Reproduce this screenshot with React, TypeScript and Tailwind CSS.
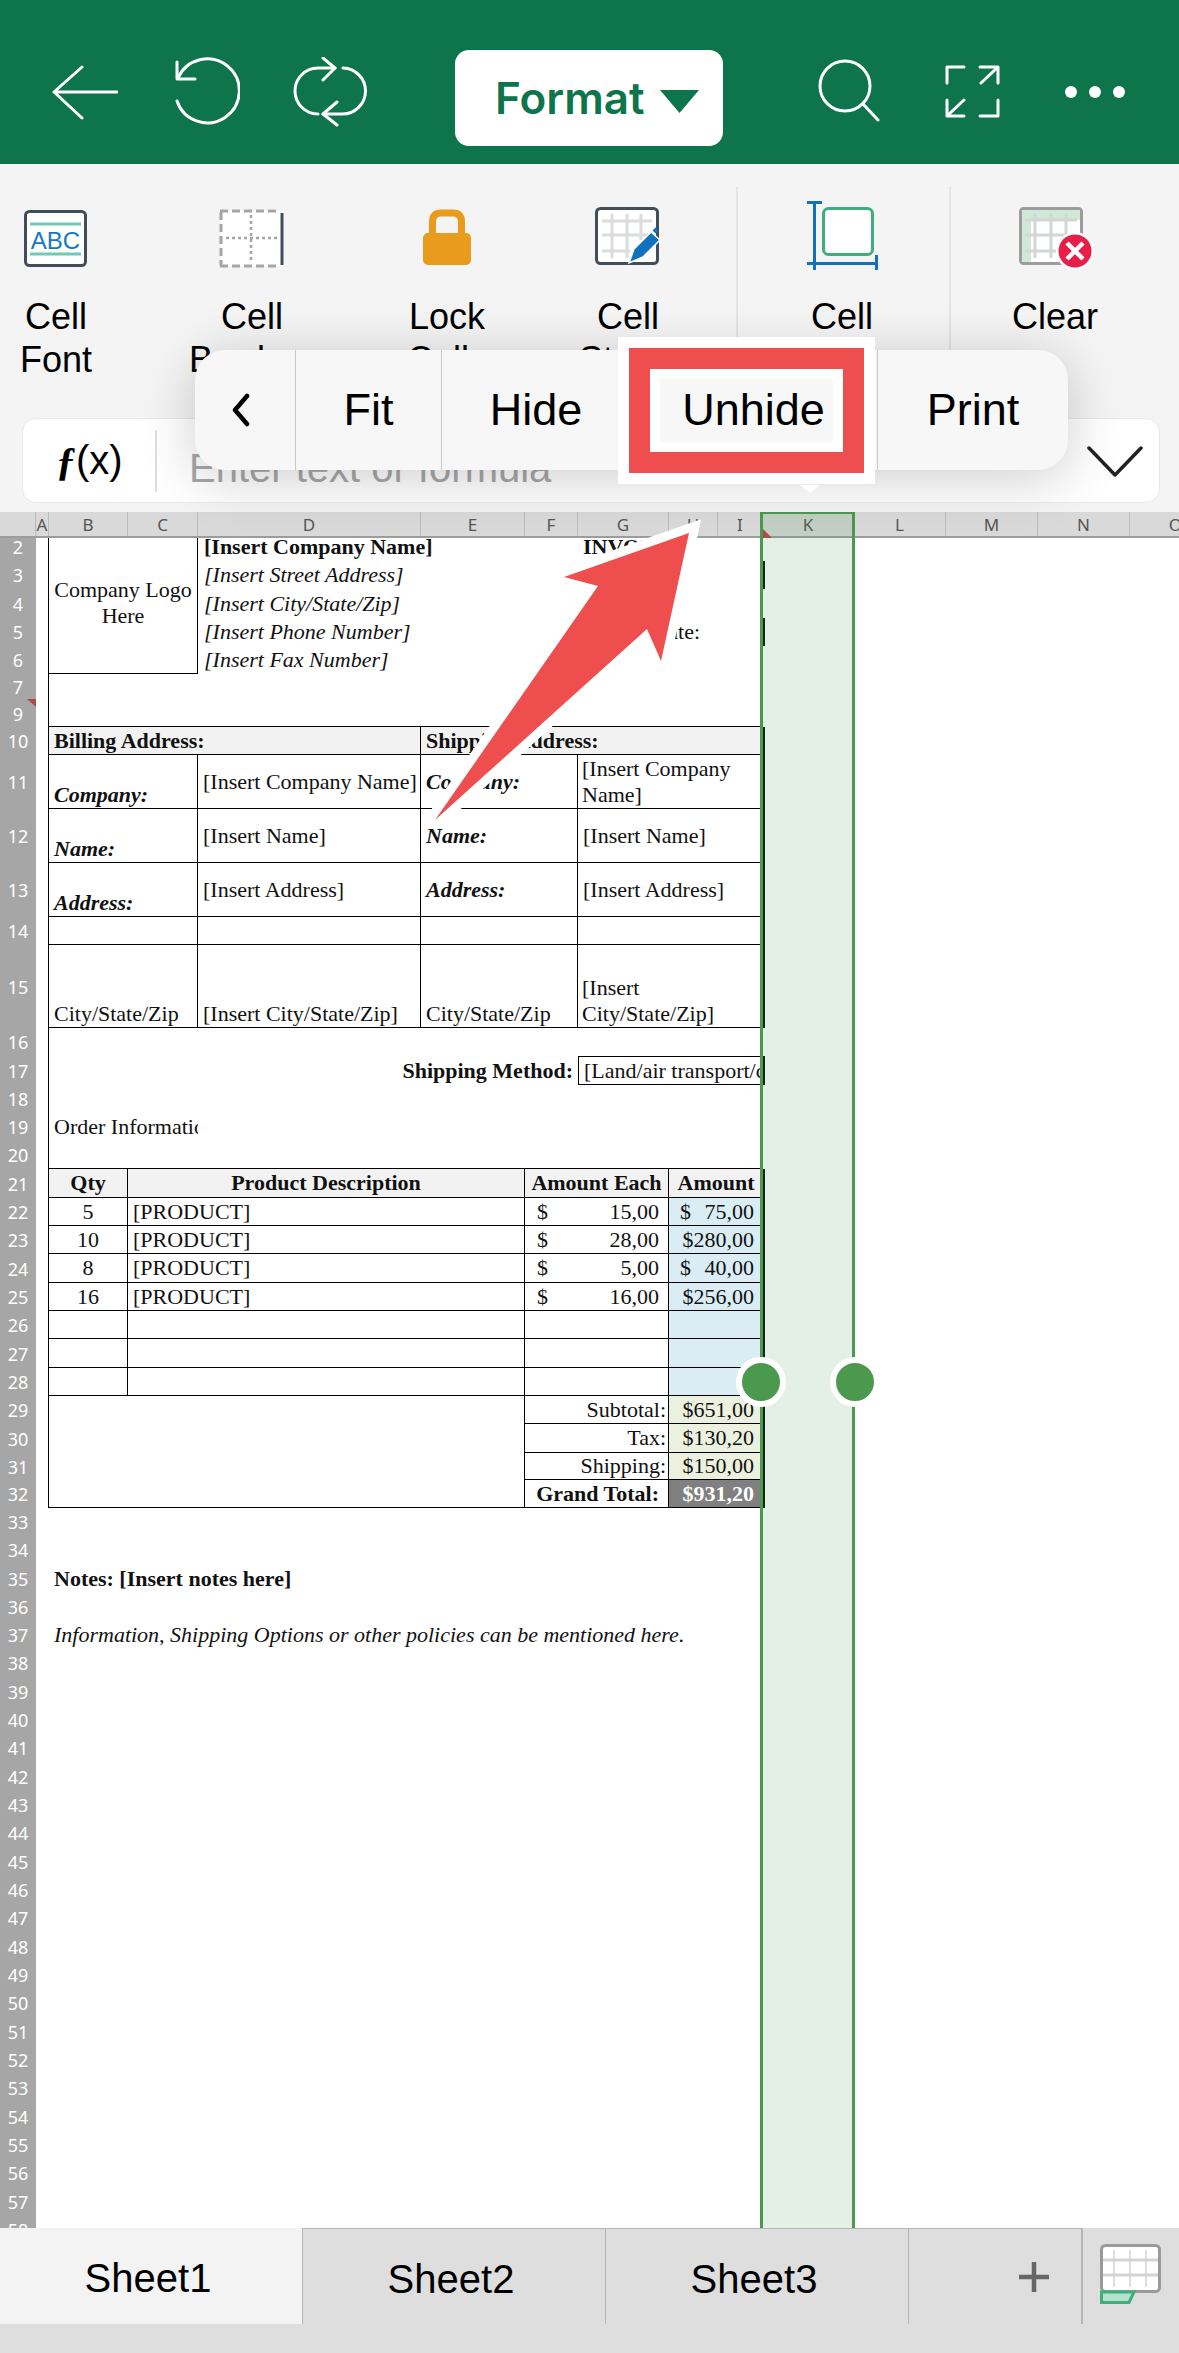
import type { ReactNode } from "react";

const COLS = [
  { label: "", w: "w-[36px]" },
  { label: "A", w: "w-[13px]" },
  { label: "B", w: "w-[79px]" },
  { label: "C", w: "w-[70px]" },
  { label: "D", w: "w-[223px]" },
  { label: "E", w: "w-[104px]" },
  { label: "F", w: "w-[53px]" },
  { label: "G", w: "w-[91px]" },
  { label: "H", w: "w-[49px]" },
  { label: "I", w: "w-[45px]" },
  { label: "K", w: "w-[91px]" },
  { label: "L", w: "w-[92px]" },
  { label: "M", w: "w-[92px]" },
  { label: "N", w: "w-[92px]" },
  { label: "O", w: "w-[92px]" },
];

const txt = "overflow-hidden whitespace-nowrap px-[5px] p-0";
const line = "border-b border-black";
const lineR = "border-r border-black";
const rowLabel = "relative bg-[#a6a6a6] p-0 text-center font-['Noto_Sans',sans-serif] text-[18px] leading-none text-white";

function Row({
  n,
  h = "h-[28px]",
  frame = true,
  dark = false,
  mark = false,
  children,
}: {
  n: number;
  h?: string;
  frame?: boolean;
  dark?: boolean;
  mark?: boolean;
  children?: ReactNode;
}) {
  return (
    <tr className={h}>
      <td className={rowLabel}>
        {n}
        {mark && (
          <svg className="absolute bottom-[-7px] right-0 z-10" width="9" height="8" viewBox="0 0 9 8">
            <path d="M0 0H9V8Z" fill="#b04a4a" />
          </svg>
        )}
      </td>
      <td className={frame ? "border-r border-black p-0" : "p-0"} />
      {children ?? <td colSpan={8} className="p-0" />}
      <td colSpan={5} className={dark ? "border-l-2 border-[#111] p-0" : "p-0"} />
    </tr>
  );
}

function ProductRow({
  n,
  h = "h-[28px]",
  qty,
  each,
  amount,
}: {
  n: number;
  h?: string;
  qty?: string;
  each?: string;
  amount?: ReactNode;
}) {
  return (
    <Row n={n} h={h} dark>
      <td className={`${line} ${lineR} p-0 text-center`}>{qty}</td>
      <td colSpan={3} className={`${line} ${lineR} ${txt} px-[4px]`}>
        {qty && "[PRODUCT]"}
      </td>
      <td colSpan={2} className={`${line} ${lineR} p-0 pl-[12px] pr-[9px]`}>
        {each && (
          <div className="flex justify-between">
            <span>$</span>
            <span>{each}</span>
          </div>
        )}
      </td>
      <td colSpan={2} className={`${line} bg-[#daedf4] p-0 pl-[11px] pr-[9px]`}>
        {amount}
      </td>
    </Row>
  );
}

function Money({ value, split }: { value: string; split?: boolean }) {
  return (
    <div className="flex justify-between">
      {split ? <span>$</span> : null}
      <span className={split ? "" : "ml-auto"}>{value}</span>
    </div>
  );
}

function TotalCells({ label, value }: { label: string; value: string }) {
  return (
    <>
      <td colSpan={2} className={`${line} ${lineR} ${txt} pr-[2px] text-right`}>
        {label}
      </td>
      <td colSpan={2} className={`${line} bg-[#ebf1de] p-0 pr-[9px] text-right`}>
        {value}
      </td>
    </>
  );
}

function Sheet() {
  const blank: number[] = [];
  for (let i = 38; i <= 58; i++) blank.push(i);

  return (
    <table className="mt-[-5px] w-[1222px] table-fixed border-separate border-spacing-0 font-['Liberation_Serif',serif] text-[22px] leading-[26px] text-[#111]">
      <colgroup>
        {COLS.map((c) => (
          <col key={c.label} className={c.w} />
        ))}
      </colgroup>
      <tbody>
        <tr className="h-[28px]">
          <td className={rowLabel}>2</td>
          <td className="border-r border-black p-0" />
          <td colSpan={2} rowSpan={5} className={`${line} ${lineR} whitespace-normal p-0 text-center`}>
            Company Logo
            <br />
            Here
          </td>
          <td colSpan={3} className={`${txt} px-[6px] font-bold`}>[Insert Company Name]</td>
          <td colSpan={3} className={`${txt} px-[4px] font-bold`}>INVOICE</td>
          <td colSpan={5} />
        </tr>
        <tr className="h-[28px]">
          <td className={rowLabel}>3</td>
          <td className="border-r border-black p-0" />
          <td colSpan={3} className={`${txt} px-[6px] italic`}>[Insert Street Address]</td>
          <td colSpan={3} />
          <td colSpan={5} className="border-l-2 border-[#111] p-0" />
        </tr>
        <tr className="h-[29px]">
          <td className={rowLabel}>4</td>
          <td className="border-r border-black p-0" />
          <td colSpan={3} className={`${txt} px-[6px] italic`}>[Insert City/State/Zip]</td>
          <td colSpan={3} />
          <td colSpan={5} className="p-0" />
        </tr>
        <tr className="h-[28px]">
          <td className={rowLabel}>5</td>
          <td className="border-r border-black p-0" />
          <td colSpan={3} className={`${txt} px-[6px] italic`}>[Insert Phone Number]</td>
          <td colSpan={3} className="p-0 pr-[63px] text-right">Date:</td>
          <td colSpan={5} className="border-l-2 border-[#111] p-0" />
        </tr>
        <tr className="h-[28px]">
          <td className={rowLabel}>6</td>
          <td className="border-r border-black p-0" />
          <td colSpan={3} className={`${txt} px-[6px] italic`}>[Insert Fax Number]</td>
          <td colSpan={3} />
          <td colSpan={5} className="p-0" />
        </tr>
        <Row n={7} h="h-[26px]" mark />
        <tr className="h-[27px]">
          <td className={rowLabel}>9</td>
          <td className="border-r border-black p-0" />
          <td colSpan={8} className={`${line} p-0`} />
          <td colSpan={5} className="p-0" />
        </tr>

        <Row n={10} dark>
          <td colSpan={3} className={`${line} ${lineR} ${txt} px-[4px] bg-[#f2f2f2] font-bold`}>Billing Address:</td>
          <td colSpan={5} className={`${line} ${txt} bg-[#f2f2f2] px-[4px] font-bold`}>Shipping Address:</td>
        </Row>
        <Row n={11} h="h-[54px]" dark>
          <td colSpan={2} className={`${line} ${lineR} ${txt} px-[4px] align-bottom font-bold italic`}>Company:</td>
          <td className={`${line} ${lineR} ${txt}`}>[Insert Company Name]</td>
          <td colSpan={2} className={`${line} ${lineR} ${txt} px-[4px] font-bold italic`}>Company:</td>
          <td colSpan={3} className={`${line} px-[4px]`}>
            [Insert Company
            <br />
            Name]
          </td>
        </Row>
        <Row n={12} h="h-[54px]" dark>
          <td colSpan={2} className={`${line} ${lineR} ${txt} px-[4px] align-bottom font-bold italic`}>Name:</td>
          <td className={`${line} ${lineR} ${txt}`}>[Insert Name]</td>
          <td colSpan={2} className={`${line} ${lineR} ${txt} px-[4px] font-bold italic`}>Name:</td>
          <td colSpan={3} className={`${line} ${txt} px-[4px]`}>[Insert Name]</td>
        </Row>
        <Row n={13} h="h-[54px]" dark>
          <td colSpan={2} className={`${line} ${lineR} ${txt} px-[4px] align-bottom font-bold italic`}>Address:</td>
          <td className={`${line} ${lineR} ${txt}`}>[Insert Address]</td>
          <td colSpan={2} className={`${line} ${lineR} ${txt} px-[4px] font-bold italic`}>Address:</td>
          <td colSpan={3} className={`${line} ${txt} px-[4px]`}>[Insert Address]</td>
        </Row>
        <Row n={14} dark>
          <td colSpan={2} className={`${line} ${lineR} p-0`} />
          <td className={`${line} ${lineR} p-0`} />
          <td colSpan={2} className={`${line} ${lineR} p-0`} />
          <td colSpan={3} className={`${line} p-0`} />
        </Row>
        <Row n={15} h="h-[83px]" dark>
          <td colSpan={2} className={`${line} ${lineR} ${txt} px-[4px] align-bottom`}>City/State/Zip</td>
          <td className={`${line} ${lineR} ${txt} align-bottom`}>[Insert City/State/Zip]</td>
          <td colSpan={2} className={`${line} ${lineR} ${txt} px-[4px] align-bottom`}>City/State/Zip</td>
          <td colSpan={3} className={`${line} px-[4px] align-bottom`}>
            [Insert
            <br />
            City/State/Zip]
          </td>
        </Row>
        <Row n={16} />
        <Row n={17} h="h-[29px]" dark>
          <td colSpan={5} className={`${txt} px-[2px] text-right font-bold`}>Shipping Method:</td>
          <td colSpan={3} className={`border border-r-0 border-black ${txt} px-[4px]`}>[Land/air transport/carrier]</td>
        </Row>
        <Row n={18} />
        <Row n={19}>
          <td colSpan={2} className={`${txt} px-[4px]`}>Order Information</td>
          <td colSpan={6} />
        </Row>
        <tr className="h-[28px]">
          <td className={rowLabel}>20</td>
          <td className="border-r border-black p-0" />
          <td colSpan={8} className={`${line} p-0`} />
          <td colSpan={5} className="p-0" />
        </tr>

        <Row n={21} h="h-[29px]" dark>
          <td className={`${line} ${lineR} bg-[#f2f2f2] p-0 text-center font-bold`}>Qty</td>
          <td colSpan={3} className={`${line} ${lineR} bg-[#f2f2f2] p-0 text-center font-bold`}>Product Description</td>
          <td colSpan={2} className={`${line} ${lineR} bg-[#f2f2f2] p-0 text-center font-bold`}>Amount Each</td>
          <td colSpan={2} className={`${line} bg-[#f2f2f2] p-0 text-center font-bold`}>Amount</td>
        </Row>
        <ProductRow n={22} qty="5" each="15,00" amount={<Money split value="75,00" />} />
        <ProductRow n={23} qty="10" each="28,00" amount={<Money value="$280,00" />} />
        <ProductRow n={24} h="h-[29px]" qty="8" each="5,00" amount={<Money split value="40,00" />} />
        <ProductRow n={25} qty="16" each="16,00" amount={<Money value="$256,00" />} />
        <ProductRow n={26} />
        <ProductRow n={27} h="h-[29px]" />
        <ProductRow n={28} />

        <Row n={29} dark>
          <td colSpan={4} rowSpan={4} className={`${line} ${lineR} p-0`} />
          <TotalCells label="Subtotal:" value="$651,00" />
        </Row>
        <Row n={30} h="h-[29px]" dark>
          <TotalCells label="Tax:" value="$130,20" />
        </Row>
        <Row n={31} h="h-[27px]" dark>
          <TotalCells label="Shipping:" value="$150,00" />
        </Row>
        <Row n={32} dark>
          <td colSpan={2} className={`${line} ${lineR} ${txt} pr-[9px] text-right font-bold`}>Grand Total:</td>
          <td colSpan={2} className={`${line} bg-[#808080] p-0 pr-[9px] text-right font-bold text-white`}>$931,20</td>
        </Row>

        <Row n={33} frame={false} />
        <Row n={34} frame={false} />
        <Row n={35} frame={false} h="h-[29px]">
          <td colSpan={8} className={`${txt} px-[4px] font-bold`}>Notes: [Insert notes here]</td>
        </Row>
        <Row n={36} frame={false} />
        <Row n={37} frame={false}>
          <td colSpan={8} className={`${txt} px-[4px] italic`}>Information, Shipping Options or other policies can be mentioned here.</td>
        </Row>
        {blank.map((n) => (
          <Row key={n} n={n} frame={false} h={n % 3 === 0 ? "h-[29px]" : "h-[28px]"} />
        ))}
      </tbody>
    </table>
  );
}

function RibbonItem({ first, second, icon }: { first: string; second?: string; icon: ReactNode }) {
  return (
    <div className="flex w-[112px] shrink-0 flex-col items-center pt-[36px]">
      {icon}
      <div className="mt-[23px] whitespace-nowrap text-center text-[36px] leading-[43px] text-black">
        <div>{first}</div>
        {second && <div>{second}</div>}
      </div>
    </div>
  );
}

function Toolbar() {
  return (
    <div className="flex h-[164px] shrink-0 items-center bg-[#0d744c] pl-[52px] pt-[20px]">
      <svg width="66" height="66" viewBox="52 60 66 66" fill="none" stroke="white" strokeWidth="3" strokeLinecap="round" strokeLinejoin="round">
        <path d="M117 93H54M82 68L54 93L82 119" />
      </svg>
      <svg className="ml-[56px]" width="66" height="76" viewBox="174 54 66 76" fill="none" stroke="white" strokeWidth="3" strokeLinecap="round" strokeLinejoin="round">
        <path d="M177 101A32 32 0 1 0 178 78" />
        <path d="M177 62V79H195" />
      </svg>
      <svg className="ml-[53px]" width="74" height="70" viewBox="293 57 74 70" fill="none" stroke="white" strokeWidth="3" strokeLinecap="round" strokeLinejoin="round">
        <path d="M335 68H318A23 23 0 0 0 318 114H317" />
        <path d="M323 58L335 68L323 80" />
        <path d="M323 114H342A23 23 0 0 0 343 68" />
        <path d="M337 102L323 114L337 125" />
      </svg>
      <div className="ml-[88px] mt-[12px] flex h-[96px] w-[268px] items-center rounded-[14px] bg-white pl-[40px] font-['Inter',sans-serif] text-[44px] font-semibold text-[#0d744c]">
        Format
        <svg className="ml-[15px] mt-[6px]" width="39" height="23" viewBox="0 0 39 23">
          <path d="M0 0H39L19.5 23Z" fill="#0d744c" />
        </svg>
      </div>
      <svg className="ml-[95px]" width="62" height="66" viewBox="818 60 62 66" fill="none" stroke="white" strokeWidth="3" strokeLinecap="round">
        <circle cx="845" cy="87" r="25" />
        <path d="M863 105L878 121" />
      </svg>
      <svg className="ml-[65px]" width="55" height="55" viewBox="945 65 55 55" fill="none" stroke="white" strokeWidth="3" strokeLinecap="round" strokeLinejoin="round">
        <path d="M947 83V67H964M980 67H998V83M981 83L998 67M947 100V116H964M947 116L964 100M980 116H998V100" />
      </svg>
      <svg className="ml-[63px]" width="64" height="16" viewBox="1063 84 64 16" fill="white">
        <circle cx="1071" cy="92" r="6" />
        <circle cx="1095" cy="92" r="6" />
        <circle cx="1119" cy="92" r="6" />
      </svg>
    </div>
  );
}

function Ribbon() {
  return (
    <div className="h-[348px] shrink-0 bg-[#f4f4f4]">
      <div className="flex h-[254px] overflow-hidden">
        <RibbonItem
          first="Cell"
          second="Font"
          icon={
            <svg width="72" height="72" viewBox="20 200 72 72">
              <rect x="25.5" y="211.5" width="60" height="54" rx="4" fill="white" stroke="#414d58" strokeWidth="3" />
              <path d="M30 224H81M30 254H81" stroke="#74c7b3" strokeWidth="3" />
              <text x="55.5" y="249" textAnchor="middle" fontFamily="Liberation Sans, sans-serif" fontSize="24" fill="#1479c4">ABC</text>
            </svg>
          }
        />
        <div className="ml-[84px]">
          <RibbonItem
            first="Cell"
            second="Borders"
            icon={
              <svg width="72" height="72" viewBox="218 200 72 72">
                <rect x="223" y="211" width="61" height="55" rx="3" fill="white" />
                <path d="M284 213V265" stroke="#414d58" strokeWidth="3" />
                <path d="M222 211H282M222 266H282M223 212V266" fill="none" stroke="#a5a5a5" strokeWidth="3" strokeDasharray="8 4" />
                <path d="M253 215V263M228 238H280" stroke="#a5a5a5" strokeWidth="2.5" strokeDasharray="3 3" />
              </svg>
            }
          />
        </div>
        <div className="ml-[83px]">
          <RibbonItem
            first="Lock"
            second="Cells"
            icon={
              <svg width="72" height="72" viewBox="411 200 72 72">
                <path d="M432.5 234V222Q432.5 213 441 213H453Q461.5 213 461.5 222V234" fill="none" stroke="#e99b1e" strokeWidth="7" />
                <rect x="423" y="233" width="48" height="32" rx="5" fill="#e99b1e" />
              </svg>
            }
          />
        </div>
        <div className="ml-[69px]">
          <RibbonItem
            first="Cell"
            second="Styles"
            icon={
              <svg width="72" height="72" viewBox="592 200 72 72">
                <rect x="596.5" y="208.5" width="61" height="55" rx="4" fill="white" stroke="#414d58" strokeWidth="3" />
                <path d="M602 221H652M602 235H652M602 251H630M612 214V258M627 214V258M641 214V240" stroke="#dadcde" strokeWidth="3" />
                <path d="M629 263L634 249L651 232L660 240L643 257Z" fill="#1271bc" stroke="white" strokeWidth="1.5" />
                <path d="M654 229L657 232" stroke="#1271bc" strokeWidth="4" />
              </svg>
            }
          />
        </div>
        <div className="ml-[52px] mt-[23px] w-[2px] shrink-0 bg-[#e4e4e4]" />
        <div className="ml-[48px]">
          <RibbonItem
            first="Cell"
            second="Size"
            icon={
              <svg width="72" height="72" viewBox="806 200 72 72">
                <rect x="823.5" y="208.5" width="49" height="46" rx="5" fill="white" stroke="#3fae7b" strokeWidth="3" />
                <path d="M807 202.5H822M814.5 202V270M807 263.5H877M876.5 255V270" fill="none" stroke="#1271bc" strokeWidth="3" />
              </svg>
            }
          />
        </div>
        <div className="ml-[51px] mt-[23px] w-[2px] shrink-0 bg-[#e4e4e4]" />
        <div className="ml-[48px]">
          <RibbonItem
            first="Clear"
            icon={
              <svg width="76" height="72" viewBox="1018 200 76 72">
                <rect x="1021.5" y="208.5" width="61" height="55" rx="3" fill="white" stroke="#9c9c9c" strokeWidth="3" />
                <path d="M1023 210H1081V220H1032V262H1023Z" fill="#cfe8d8" />
                <path d="M1026 220H1078M1026 235H1078M1026 251H1058M1036 214V258M1052 214V258M1067 214V240" stroke="#d4d6d6" strokeWidth="3" />
                <circle cx="1076" cy="251" r="19" fill="white" />
                <circle cx="1076" cy="251" r="16.5" fill="#e61e48" />
                <path d="M1068 243L1084 259M1084 243L1068 259" stroke="white" strokeWidth="4.5" />
              </svg>
            }
          />
        </div>
      </div>
      <div className="ml-[22px] mr-[19px] flex h-[85px] items-center rounded-[14px] border border-[#e9e9e9] bg-white">
        <div className="w-[132px] shrink-0 pl-[33px] text-[40px] text-black">
          <span className="font-['Liberation_Serif',serif] font-bold italic">ƒ</span>(x)
        </div>
        <div className="h-[62px] w-[2px] shrink-0 bg-[#dfdfdf]" />
        <div className="ml-[32px] flex-1 pt-[14px] text-[40px] text-[#a8a8a8]">Enter text or formula</div>
        <svg className="mr-[16px]" width="56" height="32" viewBox="0 0 56 32" fill="none" stroke="#222" strokeWidth="3.5" strokeLinecap="round" strokeLinejoin="round">
          <path d="M2 3L28 30L54 3" />
        </svg>
      </div>
    </div>
  );
}

function ContextMenu() {
  return (
    <div className="absolute left-[195px] top-[350px] z-20 flex h-[120px] w-[873px] items-center rounded-[30px] bg-[#f7f7f7] text-[45px] text-black shadow-[0_8px_55px_rgba(0,0,0,0.2)]">
      <div className="flex h-full w-[101px] items-center justify-center border-r border-[#c9c9c9] pr-[8px]">
        <svg width="20" height="34" viewBox="0 0 20 34" fill="none" stroke="black" strokeWidth="4.5" strokeLinecap="round" strokeLinejoin="round">
          <path d="M16 3L4 17L16 31" />
        </svg>
      </div>
      <div className="flex h-full w-[146px] items-center justify-center border-r border-[#c9c9c9]">Fit</div>
      <div className="flex h-full w-[188px] items-center justify-center">Hide</div>
      <div className="relative flex h-full w-[247px] items-center justify-center">
        Unhide
        <div className="absolute left-[-12px] top-[-13px] h-[147px] w-[257px] border-[11px] border-white">
          <div className="h-full w-full border-[21px] border-[#ee4e4e]">
            <div className="h-full w-full border-[10px] border-white" />
          </div>
        </div>
        <svg className="absolute left-[170px] top-[135px]" width="20" height="8" viewBox="0 0 20 8">
          <path d="M0 0H20L10 8Z" fill="white" />
        </svg>
      </div>
      <div className="flex h-full flex-1 items-center justify-center border-l border-[#c9c9c9]">Print</div>
    </div>
  );
}

function TabBar() {
  return (
    <div className="h-[125px] shrink-0 bg-[#dedede]">
      <div className="flex h-[96px] text-[40px] text-black">
        <div className="flex w-[302px] items-center justify-center bg-[#f3f3f3] pr-[6px] pt-[4px]">Sheet1</div>
        <div className="flex w-[303px] items-center justify-center border-l border-t border-[#b5b5b5] pr-[6px] pt-[4px]">Sheet2</div>
        <div className="flex w-[303px] items-center justify-center border-l border-t border-[#b5b5b5] pr-[6px] pt-[4px]">Sheet3</div>
        <div className="flex w-[173px] items-center justify-end border-l border-t border-[#b5b5b5] pr-[32px]">
          <svg width="30" height="30" viewBox="0 0 30 30">
            <path d="M15 0V30M0 15H30" stroke="#666" strokeWidth="4.5" />
          </svg>
        </div>
        <div className="flex flex-1 items-start border-l-2 border-[#b5b5b5] pl-[17px] pt-[16px]">
          <svg width="62" height="60" viewBox="0 0 62 60">
            <rect x="1.5" y="1.5" width="58" height="46" rx="4" fill="white" stroke="#9a9a9a" strokeWidth="3" />
            <path d="M3 16H58M3 31H58" stroke="#d4d4d4" strokeWidth="3" />
            <path d="M14 6V43M30 6V43M46 6V43" stroke="#d4d4d4" strokeWidth="1.5" />
            <path d="M1.5 48H34L29 58.5H1.5Z" fill="#b5e2cf" stroke="#3fae7b" strokeWidth="3" />
          </svg>
        </div>
      </div>
    </div>
  );
}

export default function App() {
  return (
    <div className="relative flex h-[2353px] w-[1179px] flex-col overflow-hidden bg-white font-['Liberation_Sans',sans-serif]">
      <Toolbar />
      <Ribbon />

      <div className="relative flex min-h-0 flex-1 flex-col overflow-hidden">
        <div className="flex h-[26px] shrink-0 overflow-hidden border-b-2 border-[#9c9c9c] bg-[#d9d9d9] font-['Noto_Sans',sans-serif] text-[17px] text-[#555]">
          {COLS.map((c) => (
            <div key={c.label} className={`${c.w} flex shrink-0 items-center justify-center border-r border-[#bbb] leading-none`}>
              {c.label}
            </div>
          ))}
        </div>
        <div className="min-h-0 flex-1 overflow-hidden">
          <Sheet />
        </div>

        {/* selected column K with its two drag handles */}
        <div className="absolute bottom-0 left-[760px] top-0 w-[95px] border-x-[3px] border-t-2 border-[#4b994f] bg-[#4b994f]/15" />
        <svg className="absolute left-[763px] top-[17px]" width="9" height="9" viewBox="0 0 9 9">
          <path d="M0 0L9 9H0Z" fill="#b04a4a" />
        </svg>
        <div className="absolute left-[736px] top-[845px] h-[50px] w-[50px] rounded-full border-[6px] border-white bg-[#4b994f]" />
        <div className="absolute left-[830px] top-[845px] h-[50px] w-[50px] rounded-full border-[6px] border-white bg-[#4b994f]" />
      </div>

      <TabBar />
      <ContextMenu />

      <svg className="absolute left-[420px] top-[515px] z-10" width="290" height="320" viewBox="420 515 290 320">
        <path
          d="M689 533L564 577L598 586L435 820L647 629L661 661Z"
          fill="#ee4e4e"
          stroke="white"
          strokeWidth="18"
          strokeLinejoin="miter"
          paintOrder="stroke"
        />
      </svg>
    </div>
  );
}
